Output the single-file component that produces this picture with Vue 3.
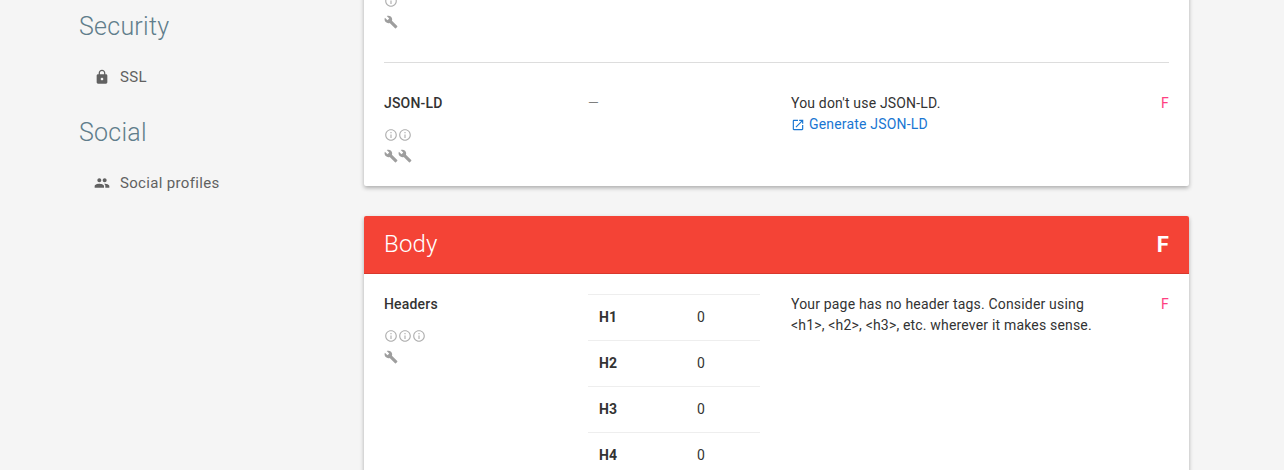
<script setup>
const icons = {
  lock: 'M18 8h-1V6c0-2.76-2.24-5-5-5S7 3.24 7 6v2H6c-1.1 0-2 .9-2 2v10c0 1.1.9 2 2 2h12c1.1 0 2-.9 2-2V10c0-1.1-.9-2-2-2zm-6 9c-1.1 0-2-.9-2-2s.9-2 2-2 2 .9 2 2-.9 2-2 2zm3.1-9H8.9V6c0-1.71 1.39-3.1 3.1-3.1 1.71 0 3.1 1.39 3.1 3.1v2z',
  people: 'M16 11c1.66 0 2.99-1.34 2.99-3S17.66 5 16 5c-1.66 0-3 1.34-3 3s1.34 3 3 3zm-8 0c1.66 0 2.99-1.34 2.99-3S9.66 5 8 5C6.34 5 5 6.34 5 8s1.34 3 3 3zm0 2c-2.33 0-7 1.17-7 3.5V19h14v-2.5c0-2.33-4.67-3.5-7-3.5zm8 0c-.29 0-.62.02-.97.05 1.16.84 1.97 1.97 1.97 3.45V19h6v-2.5c0-2.33-4.67-3.5-7-3.5z',
  build: 'M22.7 19l-9.1-9.1c.9-2.3.4-5-1.5-6.9-2-2-5-2.4-7.4-1.3L9 6 6 9 1.6 4.7C.4 7.1.9 10.1 2.9 12.1c1.9 1.9 4.6 2.4 6.9 1.5l9.1 9.1c.4.4 1 .4 1.4 0l2.3-2.3c.5-.4.5-1.1.1-1.4z',
  info: 'M11 17h2v-6h-2v6zm1-15C6.48 2 2 6.48 2 12s4.48 10 10 10 10-4.48 10-10S17.52 2 12 2zm0 18c-4.41 0-8-3.59-8-8s3.59-8 8-8 8 3.59 8 8-3.59 8-8 8zM11 9h2V7h-2v2z',
  open: 'M19 19H5V5h7V3H5c-1.11 0-2 .9-2 2v14c0 1.1.89 2 2 2h14c1.1 0 2-.9 2-2v-7h-2v7zM14 3v2h3.59l-9.83 9.83 1.41 1.41L19 6.41V10h2V3h-7z'
}

const headerRows = ['H1', 'H2', 'H3', 'H4']
</script>

<template>
  <div class="page">
    <aside class="sidebar">
      <h2 class="side-title">Security</h2>
      <a class="side-link">
        <svg class="side-icon" viewBox="0 0 24 24"><path :d="icons.lock" /></svg>
        SSL
      </a>
      <h2 class="side-title">Social</h2>
      <a class="side-link">
        <svg class="side-icon" viewBox="0 0 24 24"><path :d="icons.people" /></svg>
        Social profiles
      </a>
    </aside>

    <main class="content">
      <section class="card card-first">
        <div class="row row-clipped">
          <div class="name-col">
            <div class="icon-row">
              <svg class="mini" viewBox="0 0 24 24"><path :d="icons.info" /></svg>
            </div>
            <div class="icon-row">
              <svg class="mini wrench" viewBox="0 0 24 24"><path :d="icons.build" /></svg>
            </div>
          </div>
        </div>
        <div class="row">
          <div class="name-col">
            <div class="name">JSON-LD</div>
            <div class="icon-row icon-row-first">
              <svg v-for="n in 2" :key="n" class="mini" viewBox="0 0 24 24"><path :d="icons.info" /></svg>
            </div>
            <div class="icon-row">
              <svg v-for="n in 2" :key="n" class="mini wrench" viewBox="0 0 24 24"><path :d="icons.build" /></svg>
            </div>
          </div>
          <div class="value-col"><div class="dash">—</div></div>
          <div class="desc-col">
            <div>You don't use JSON-LD.</div>
            <a class="link">
              <svg class="link-icon" viewBox="0 0 24 24"><path :d="icons.open" /></svg>
              Generate JSON-LD
            </a>
          </div>
          <div class="grade">F</div>
        </div>
      </section>

      <section class="card card-body">
        <header class="card-head">
          <h2>Body</h2>
          <span class="head-grade">F</span>
        </header>
        <div class="row row-body">
          <div class="name-col">
            <div class="name">Headers</div>
            <div class="icon-row icon-row-first">
              <svg v-for="n in 3" :key="n" class="mini" viewBox="0 0 24 24"><path :d="icons.info" /></svg>
            </div>
            <div class="icon-row">
              <svg class="mini wrench" viewBox="0 0 24 24"><path :d="icons.build" /></svg>
            </div>
          </div>
          <div class="value-col">
            <table class="tags">
              <tbody>
                <tr v-for="h in headerRows" :key="h">
                  <th>{{ h }}</th>
                  <td>0</td>
                </tr>
              </tbody>
            </table>
          </div>
          <div class="desc-col">
            Your page has no header tags. Consider using &lt;h1&gt;, &lt;h2&gt;, &lt;h3&gt;, etc. wherever it makes sense.
          </div>
          <div class="grade">F</div>
        </div>
      </section>
    </main>
  </div>
</template>

<style>
html,
body {
  margin: 0;
  background: #f5f5f5;
}
</style>

<style scoped>
.page {
  display: flex;
  height: 470px;
  overflow: hidden;
  background: #f5f5f5;
  font-family: Roboto, "Liberation Sans", sans-serif;
  font-size: 14px;
  line-height: 21px;
  letter-spacing: 0.18px;
  color: #333;
}

.sidebar {
  width: 285px;
  margin-left: 79px;
  flex-shrink: 0;
}

.side-title {
  margin: 0;
  font-size: 25px;
  line-height: 30px;
  font-weight: 300;
  letter-spacing: 0.25px;
  color: #607d8b;
}

.side-title:first-child {
  margin-top: 12px;
}

.side-link {
  display: flex;
  align-items: center;
  height: 24px;
  margin: 23px 0 29px 15px;
  font-size: 15px;
  letter-spacing: 0.33px;
  color: #616161;
}

.side-link:last-child {
  margin-bottom: 0;
}

.side-icon {
  width: 16px;
  height: 16px;
  margin-right: 10px;
  fill: #616161;
}

.content {
  width: 825px;
  flex-shrink: 0;
}

.card {
  background: #fff;
  border-radius: 2px;
  box-shadow: 0 2px 4px rgba(0, 0, 0, 0.3);
}

.card-first {
  margin-top: -10px;
  padding: 0 20px;
}

.card-body {
  margin-top: 30px;
}

.row {
  display: grid;
  grid-template-columns: 204px 172px 1fr 60px;
  padding: 30px 0 20px;
}

.row-clipped {
  padding: 0 0 30px;
  border-bottom: 1px solid #ddd;
}

.row-body {
  padding: 20px 20px 0;
}

.name {
  font-weight: 500;
}

.icon-row {
  display: flex;
  height: 21px;
  align-items: center;
}

.icon-row-first {
  margin-top: 10px;
}

.mini {
  width: 14px;
  height: 14px;
  fill: #b0b0b0;
}

.wrench {
  fill: #9e9e9e;
}

.dash {
  color: #616161;
  font-weight: 300;
}

.desc-col {
  margin-left: 31px;
  max-width: 320px;
}

.link {
  display: flex;
  align-items: center;
  color: #1976d2;
}

.link-icon {
  width: 14px;
  height: 14px;
  margin-right: 4px;
  fill: #1976d2;
}

.grade {
  text-align: right;
  color: #ff4081;
}

.card-head {
  display: flex;
  justify-content: space-between;
  align-items: center;
  height: 57px;
  padding: 0 20px;
  background: #f44336;
  border-bottom: 1px solid #d8382d;
  border-radius: 2px 2px 0 0;
  color: #fff;
}

.card-head h2 {
  margin: 0;
  font-size: 24px;
  font-weight: 300;
}

.head-grade {
  font-size: 22px;
  font-weight: 700;
}

.tags {
  width: 172px;
  border-collapse: collapse;
}

.tags tr {
  height: 46px;
  border-top: 1px solid #eee;
}

.tags th {
  width: 109px;
  padding: 0 0 0 11px;
  box-sizing: border-box;
  text-align: left;
  font-weight: 700;
}

.tags td {
  padding: 0;
}
</style>
